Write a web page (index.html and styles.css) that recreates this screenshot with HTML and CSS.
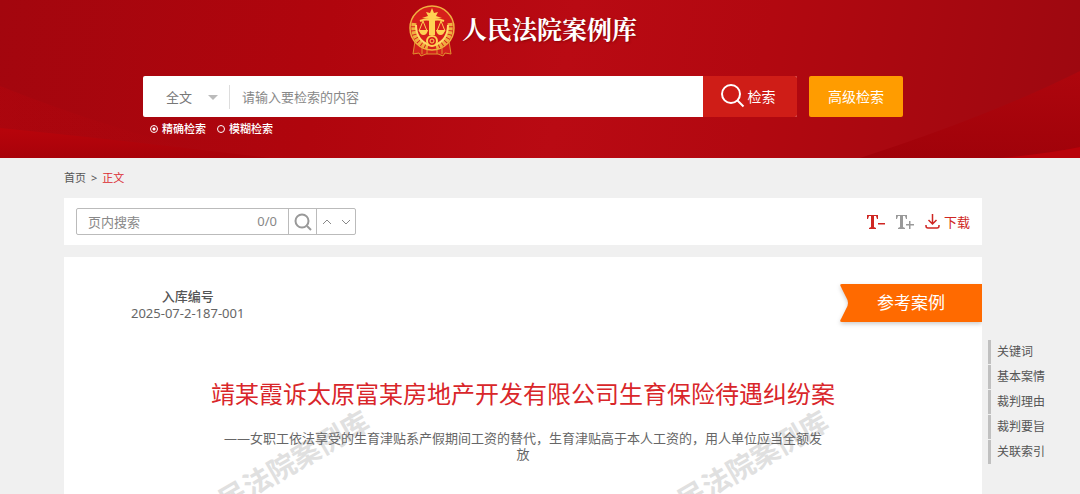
FILE: index.html
```html
<!doctype html>
<html lang="zh-CN">
<head>
    <meta charset="UTF-8">
    <meta name="viewport" content="width=device-width, initial-scale=1.0">
    <link rel="stylesheet" href="styles.css">
    <title>人民法院案例库</title>
</head>
<body>
<header class="banner">
    <svg class="banner-bg" viewBox="0 0 1080 158" preserveAspectRatio="none" aria-hidden="true">
        <defs>
            <linearGradient id="wave-left" x1="0" y1="0" x2="1" y2="0">
                <stop offset="0" stop-color="#c2040c" stop-opacity=".25"/>
                <stop offset="1" stop-color="#b0040c" stop-opacity="0"/>
            </linearGradient>
            <linearGradient id="wave-low" x1="0" y1="0" x2="0" y2="1">
                <stop offset="0" stop-color="#b8040b"/>
                <stop offset="1" stop-color="#a8020a"/>
            </linearGradient>
            <linearGradient id="wave-right" x1="0" y1="0" x2="0" y2="1">
                <stop offset="0" stop-color="#ae060d"/>
                <stop offset="1" stop-color="#a0020a"/>
            </linearGradient>
        </defs>
        <path d="M0 86Q110 130 230 158H0z" fill="url(#wave-left)"/>
        <path d="M0 128Q120 140 270 158H0z" fill="url(#wave-low)"/>
        <path d="M860 158Q990 116 1080 71V158z" fill="url(#wave-right)"/>
        <path d="M1000 158Q1045 154 1080 147V158z" fill="#b9020a"/>
    </svg>
    <h1 class="logo">
        <svg class="emblem" viewBox="0 0 46 52" aria-hidden="true">
            <path d="M6 36L4 49l6-1 2 3 5-2h12l5 2 2-3 6 1-2-13z" fill="#d3211c" stroke="#e0912f"/>
            <path d="M13 43v6M18 44v5M28 44v5M33 43v6" stroke="#e0912f" fill="none"/>
            <circle cx="23" cy="23" r="22" fill="#d71f1b" stroke="#f0b040" stroke-width="1.500"/>
            <path d="M5 18Q3 37 19 42M41 18Q43 37 27 42" fill="none" stroke="#f0b040" stroke-width="5" stroke-dasharray="3 1"/>
            <path d="M7 20Q7 35 20 40M39 20Q39 35 26 40" fill="none" stroke="#ffda68" stroke-width="2"/>
            <path d="M23 3l2 5 4-1-2 4 6 2-7 1v16h-6V14l-7-1 6-2-2-4 4 1z" fill="#ffd253"/>
            <path d="M11 16Q18 13 23 16Q28 13 35 16" fill="none" stroke="#ffd253" stroke-width="2"/>
            <path d="M14 16l-4 10h8zM32 16l-4 10h8z" fill="none" stroke="#ffd253"/>
            <path d="M10 25h9q-1 5-4.500 5T10 25zM27 25h9q-1 5-4.500 5T27 25z" fill="#ffd253"/>
            <circle cx="23" cy="36" r="5" fill="#d71f1b" stroke="#ffd253" stroke-width="2"/>
            <circle cx="23" cy="36" r="2" fill="#d71f1b" stroke="#ffd253"/>
        </svg>
        <span>人民法院案例库</span>
    </h1>
    <form class="search">
        <div class="search-row">
            <div class="search-box">
                <div class="scope">
                    <select aria-label="检索范围">
                        <option>全文</option>
                    </select>
                </div>
                <input class="keyword" type="text" placeholder="请输入要检索的内容" aria-label="检索内容">
                <button class="btn btn-search" type="button">
                    <svg viewBox="0 0 24 24" aria-hidden="true">
                        <circle cx="10" cy="10" r="9"/>
                        <path d="M16.500 16.500l6 6"/>
                    </svg>
                    检索
                </button>
            </div>
            <button class="btn btn-advanced" type="button">高级检索</button>
        </div>
        <div class="modes">
            <label><input type="radio" name="mode" checked>精确检索</label>
            <label><input type="radio" name="mode">模糊检索</label>
        </div>
    </form>
</header>

<div class="page">
    <main>
        <nav class="breadcrumb">
            <a href="#">首页</a>
            <span>&gt;</span>
            <a class="current" href="#">正文</a>
        </nav>

        <div class="toolbar">
            <div class="find">
                <input type="text" placeholder="页内搜索" aria-label="页内搜索">
                <span class="count">0/0</span>
                <button class="find-go" type="button" aria-label="搜索">
                    <svg viewBox="0 0 18 18" aria-hidden="true">
                        <circle cx="8" cy="8" r="6.500"/>
                        <path d="M13 13l4 4"/>
                    </svg>
                </button>
                <div class="find-step">
                    <button type="button" aria-label="上一个">
                        <svg viewBox="0 0 10 6" aria-hidden="true"><path d="M1 5l4-4 4 4"/></svg>
                    </button>
                    <button type="button" aria-label="下一个">
                        <svg viewBox="0 0 10 6" aria-hidden="true"><path d="M1 1l4 4 4-4"/></svg>
                    </button>
                </div>
            </div>
            <div class="tools">
                <button class="tool" type="button" aria-label="缩小字号">
                    <svg class="size-icon" viewBox="0 0 18 16" aria-hidden="true">
                        <path d="M0 1h11v4h-1L9 2H7v11l2 1v1H2v-1l2-1V2H2L1 5H0zM11 9h7v1.500h-7z"/>
                    </svg>
                </button>
                <button class="tool tool-grey" type="button" aria-label="放大字号">
                    <svg class="size-icon" viewBox="0 0 18 16" aria-hidden="true">
                        <path d="M0 1h11v4h-1L9 2H7v11l2 1v1H2v-1l2-1V2H2L1 5H0zM10 10h3V7h1.500v3H18v1.500h-3.500V15H13v-3.500h-3z"/>
                    </svg>
                </button>
                <button class="tool" type="button">
                    <svg class="down-icon" viewBox="0 0 15 15" aria-hidden="true">
                        <path d="M7.500 0v10M3.500 6l4 4 4-4M1 11v1q0 2 2 2h9q2 0 2-2v-1"/>
                    </svg>
                    下载
                </button>
            </div>
        </div>

        <article class="case">
            <div class="watermarks" aria-hidden="true">
                <span>人民法院案例库</span>
                <span>人民法院案例库</span>
            </div>
            <div class="case-top">
                <dl class="case-no">
                    <dt>入库编号</dt>
                    <dd>2025-07-2-187-001</dd>
                </dl>
                <div class="ribbon">
                    <svg viewBox="0 0 142 38" preserveAspectRatio="none" aria-hidden="true">
                        <path d="M2 0H142V38H2Q-1 38 1 35L6 25Q10 19 6 13L1 3Q-1 0 2 0z"/>
                    </svg>
                    <span>参考案例</span>
                </div>
            </div>
            <h2>靖某霞诉太原富某房地产开发有限公司生育保险待遇纠纷案</h2>
            <p class="subtitle">——女职工依法享受的生育津贴系产假期间工资的替代，生育津贴高于本人工资的，用人单位应当全额发放</p>
        </article>
    </main>

    <nav class="anchors">
        <a href="#">关键词</a>
        <a href="#">基本案情</a>
        <a href="#">裁判理由</a>
        <a href="#">裁判要旨</a>
        <a href="#">关联索引</a>
    </nav>
</div>
</body>
</html>
```
FILE: styles.css
```css
* {
    box-sizing: border-box;
}

body {
    display: flex;
    flex-direction: column;
    min-height: 100vh;
    margin: 0;
    color: #555;
    background: #f0f0f0;
    font-family: "Noto Sans", "Noto Sans CJK SC", sans-serif;
    font-size: 13px;
}

a {
    color: inherit;
    text-decoration: none;
}

input, select, button {
    margin: 0;
    padding: 0;
    border: 0;
    outline: none;
    background: none;
    color: inherit;
    font: inherit;
}

button {
    cursor: pointer;
}

svg {
    flex: none;
}

/* banner */
.banner {
    position: relative;
    padding: 5px 34px 21px 0;
    color: #fff;
    background: linear-gradient(100deg, #a3060e 0, #b0050d 30%, #b90a13 52%, #b20810 70%, #9d0810 100%);
}

.banner-bg {
    position: absolute;
    top: 0;
    left: 0;
    width: 100%;
    height: 100%;
}

.logo {
    position: relative;
    display: flex;
    justify-content: center;
    align-items: flex-start;
    gap: 7px;
    height: 52px;
    margin: 0 0 19px;
    font-family: "Noto Serif CJK SC", "Noto Sans CJK SC", serif;
    font-size: 25px;
    line-height: 46px;
    text-shadow: 1px 1px 2px rgba(90, 0, 0, .5);
}

.emblem {
    width: 46px;
    height: 52px;
}

.search {
    position: relative;
    max-width: 760px;
    margin: 0 auto;
}

.search-row {
    display: flex;
    gap: 12px;
    height: 41px;
}

.search-box {
    display: flex;
    flex: 1;
    overflow: hidden;
    border-radius: 2px;
    background: #fff;
}

.scope {
    display: flex;
    align-items: center;
    width: 87px;
    height: 24px;
    margin: 9px 0;
    padding: 0 11px 0 23px;
    border-right: 1px solid #ddd;
    color: #777;
}

.scope select {
    flex: 1;
    appearance: none;
}

.scope:after {
    content: "";
    border: 5px solid transparent;
    border-top-color: #bbb;
    border-bottom: 0;
}

.keyword {
    flex: 1;
    padding: 0 12px;
    color: #555;
}

::placeholder {
    color: #888;
    opacity: 1;
}

.btn {
    display: flex;
    justify-content: center;
    align-items: center;
    gap: 3px;
    width: 94px;
    padding-bottom: 1px;
    color: #fff;
    font-size: 14px;
}

.btn-search {
    padding-right: 4px;
    background: #cf1d17;
}

.btn-search svg {
    width: 24px;
    height: 24px;
    fill: none;
    stroke: #fff;
    stroke-width: 2;
}

.btn-advanced {
    border-radius: 2px;
    background: #ff9c00;
}

.modes {
    display: flex;
    gap: 11px;
    padding: 4px 7px 0;
    font-size: 11px;
    font-weight: 500;
    line-height: 16px;
}

.modes label {
    display: flex;
    align-items: center;
    gap: 4px;
}

.modes input {
    width: 8px;
    height: 8px;
    border: 1px solid #fff;
    border-radius: 50%;
    appearance: none;
}

.modes input:checked {
    background: radial-gradient(#fff 0, #fff 1px, transparent 2px);
}

/* page */
.page {
    display: grid;
    flex: 1;
    grid-template-columns: minmax(0, 1fr) 92px;
    column-gap: 6px;
    padding-left: 64px;
}

main {
    display: flex;
    flex-direction: column;
}

.breadcrumb {
    display: flex;
    gap: 5px;
    font-size: 11px;
    line-height: 40px;
}

.breadcrumb .current {
    color: #db2b30;
}

.toolbar {
    display: flex;
    justify-content: space-between;
    align-items: center;
    height: 47px;
    margin-bottom: 12px;
    padding: 0 12px;
    background: #fff;
}

.find {
    display: flex;
    width: 280px;
    height: 27px;
    border: 1px solid #bbb;
    border-radius: 2px;
}

.find input {
    flex: 1;
    min-width: 0;
    padding-left: 11px;
}

.count {
    padding-right: 11px;
    color: #888;
    line-height: 25px;
}

.find button {
    display: flex;
    justify-content: center;
    align-items: center;
}

.find svg {
    width: 10px;
    height: 6px;
    fill: none;
    stroke: #888;
}

.find .find-go {
    width: 28px;
    border-left: 1px solid #bbb;
}

.find .find-go svg {
    width: 18px;
    height: 18px;
    stroke: #999;
    stroke-width: 2;
}

.find-step {
    display: flex;
    width: 39px;
    border-left: 1px solid #bbb;
}

.find-step button {
    flex: 1;
}

.tools {
    display: flex;
    gap: 11px;
}

.tool {
    display: flex;
    align-items: center;
    gap: 4px;
    color: #cf2622;
}

.tool-grey {
    color: #999;
}

.size-icon {
    width: 18px;
    height: 16px;
    fill: currentColor;
}

.down-icon {
    width: 15px;
    height: 15px;
    fill: none;
    stroke: currentColor;
    stroke-width: 1.5;
}

/* case */
.case {
    position: relative;
    flex: 1;
    overflow: hidden;
    padding-top: 27px;
    background: #fff;
}

.watermarks {
    position: absolute;
    top: 189px;
    left: 0;
    display: flex;
    width: 100%;
    color: #e0e0e0;
    font-size: 28px;
    font-weight: bold;
    line-height: 42px;
}

.watermarks span {
    width: 50%;
    padding-right: 24px;
    text-align: center;
    white-space: nowrap;
    transform: rotate(-30deg);
    transform-origin: calc(50% - 12px) 50%;
}

.case-top {
    position: relative;
    display: flex;
    justify-content: space-between;
    align-items: flex-start;
    padding-left: 67px;
}

.case-no {
    margin: 4px 0 0;
    line-height: 17px;
    text-align: center;
}

.case-no dt {
    font-weight: 500;
}

.case-no dd {
    margin: 0;
    color: #666;
}

.ribbon {
    position: relative;
    width: 142px;
    color: #fff;
    font-size: 17px;
    line-height: 38px;
    text-align: center;
}

.ribbon svg {
    position: absolute;
    top: 0;
    left: 0;
    width: 100%;
    height: 100%;
    fill: #ff6a00;
    filter: drop-shadow(0 2px 2px rgba(0, 0, 0, .2));
}

.ribbon span {
    position: relative;
}

.case h2 {
    position: relative;
    margin: 54px 0 18px;
    color: #d9262a;
    font-size: 24px;
    font-weight: normal;
    line-height: 36px;
    text-align: center;
}

.subtitle {
    position: relative;
    max-width: 600px;
    margin: 0 auto;
    color: #666;
    line-height: 16px;
    text-align: center;
}

/* anchors */
.anchors {
    display: flex;
    flex-direction: column;
    gap: 1px;
    margin-top: 182px;
    font-size: 12px;
    line-height: 24px;
}

.anchors a {
    padding-left: 6px;
    border-left: 3px solid #c0c0c0;
}
```
